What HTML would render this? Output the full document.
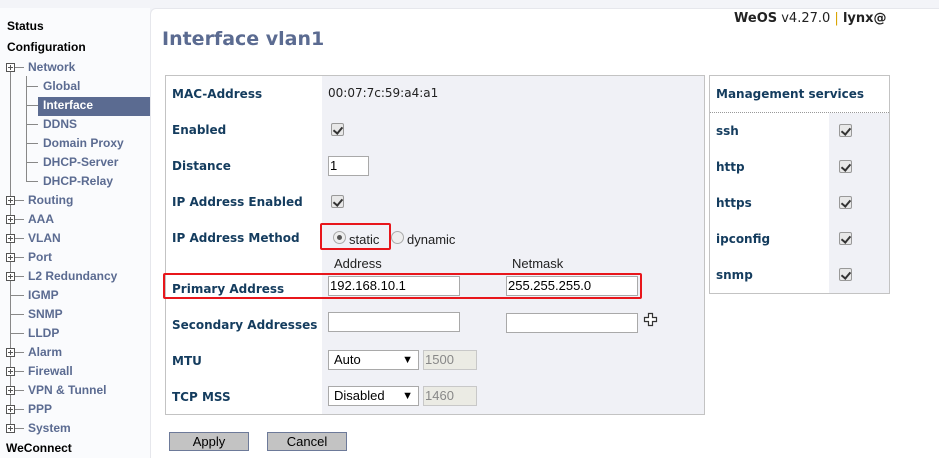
<!DOCTYPE html>
<html><head><meta charset="utf-8"><style>
*{margin:0;padding:0;box-sizing:border-box}
body{width:939px;height:458px;overflow:hidden;background:#f3f4f8;font-family:"Liberation Sans",Arial,sans-serif;position:relative}
.a{position:absolute;white-space:nowrap}
.sb{font-weight:bold;font-size:12px;color:#5b6b91;line-height:19px}
.top{color:#000}
.lbl{font-family:"DejaVu Sans",Verdana,sans-serif;font-weight:bold;font-size:12px;color:#143c5e;line-height:16px}
.cb{position:absolute;width:13px;height:13px;border:1px solid #999;border-radius:2px;background:#e8e8e8}
.cb:after{content:"";position:absolute;left:3px;top:1px;width:4px;height:7px;border:solid #333;border-width:0 2px 2px 0;transform:rotate(40deg)}
.in{position:absolute;border:1px solid #a9a9a9;background:#fff;font-size:13px;line-height:18px;padding-left:1px;color:#000;height:20px}
.dis{background:#ebebe4;color:#888;border-color:#c8c8c8}
.sel{position:absolute;border:1px solid #a9a9a9;background:#fff;font-size:13px;line-height:18px;padding-left:5px;height:20px;width:91px}
.sel:after{content:"▼";position:absolute;right:5px;top:0;font-size:11px}
.pl{position:absolute;width:9px;height:9px;border:1px solid #555;background:#fff}
.pl:before{content:"";position:absolute;left:1px;top:3px;width:5px;height:1px;background:#555}
.pl:after{content:"";position:absolute;left:3px;top:1px;width:1px;height:5px;background:#555}
.btn{position:absolute;background:#c3c3c3;border:1px solid #6d7a99;font-size:13px;text-align:center;line-height:17px;height:19px}
.h{position:absolute;height:1px;background:#888}
</style></head><body>
<div class="a" style="left:0;top:8px;width:150px;height:450px;background:#fafbfd"></div>
<div class="a sb top" style="left:7px;top:17px">Status</div>
<div class="a sb top" style="left:7px;top:38px">Configuration</div>
<div class="a" style="left:10px;top:68px;width:1px;height:362px;background:#888"></div>
<div class="a" style="left:26px;top:76px;width:1px;height:106px;background:#888"></div>
<div class="a" style="left:38px;top:97px;width:113px;height:19px;background:#5b6b91"></div>
<div class="a sb" style="left:28px;top:58px">Network</div>
<div class="a sb" style="left:43px;top:77px">Global</div>
<div class="a sb" style="left:43px;top:96px;color:#fff">Interface</div>
<div class="a sb" style="left:43px;top:115px">DDNS</div>
<div class="a sb" style="left:43px;top:134px">Domain Proxy</div>
<div class="a sb" style="left:43px;top:153px">DHCP-Server</div>
<div class="a sb" style="left:43px;top:172px">DHCP-Relay</div>
<div class="a sb" style="left:28px;top:191px">Routing</div>
<div class="a sb" style="left:28px;top:210px">AAA</div>
<div class="a sb" style="left:28px;top:229px">VLAN</div>
<div class="a sb" style="left:28px;top:248px">Port</div>
<div class="a sb" style="left:28px;top:267px">L2 Redundancy</div>
<div class="a sb" style="left:28px;top:286px">IGMP</div>
<div class="a sb" style="left:28px;top:305px">SNMP</div>
<div class="a sb" style="left:28px;top:324px">LLDP</div>
<div class="a sb" style="left:28px;top:343px">Alarm</div>
<div class="a sb" style="left:28px;top:362px">Firewall</div>
<div class="a sb" style="left:28px;top:381px">VPN &amp; Tunnel</div>
<div class="a sb" style="left:28px;top:400px">PPP</div>
<div class="a sb" style="left:28px;top:419px">System</div>
<div class="a sb top" style="left:6px;top:439px">WeConnect</div>
<div class="h" style="left:10px;top:67px;width:14px"></div>
<div class="h" style="left:26px;top:86px;width:12px"></div>
<div class="h" style="left:26px;top:105px;width:12px"></div>
<div class="h" style="left:26px;top:124px;width:12px"></div>
<div class="h" style="left:26px;top:143px;width:12px"></div>
<div class="h" style="left:26px;top:162px;width:12px"></div>
<div class="h" style="left:26px;top:181px;width:12px"></div>
<div class="h" style="left:10px;top:200px;width:14px"></div>
<div class="h" style="left:10px;top:219px;width:14px"></div>
<div class="h" style="left:10px;top:238px;width:14px"></div>
<div class="h" style="left:10px;top:257px;width:14px"></div>
<div class="h" style="left:10px;top:276px;width:14px"></div>
<div class="h" style="left:10px;top:295px;width:14px"></div>
<div class="h" style="left:10px;top:314px;width:14px"></div>
<div class="h" style="left:10px;top:333px;width:14px"></div>
<div class="h" style="left:10px;top:352px;width:14px"></div>
<div class="h" style="left:10px;top:371px;width:14px"></div>
<div class="h" style="left:10px;top:390px;width:14px"></div>
<div class="h" style="left:10px;top:409px;width:14px"></div>
<div class="h" style="left:10px;top:428px;width:14px"></div>
<div class="pl" style="left:6px;top:63px"></div>
<div class="pl" style="left:6px;top:196px"></div>
<div class="pl" style="left:6px;top:215px"></div>
<div class="pl" style="left:6px;top:234px"></div>
<div class="pl" style="left:6px;top:253px"></div>
<div class="pl" style="left:6px;top:272px"></div>
<div class="pl" style="left:6px;top:348px"></div>
<div class="pl" style="left:6px;top:367px"></div>
<div class="pl" style="left:6px;top:386px"></div>
<div class="pl" style="left:6px;top:405px"></div>
<div class="pl" style="left:6px;top:424px"></div>
<div class="a" style="left:150px;top:8px;width:789px;height:450px;background:#fff;border-radius:6px 0 0 0;border-left:1px solid #e6e7ec;border-top:1px solid #e6e7ec"></div>
<div class="a" style="left:734px;top:11px;font-family:'DejaVu Sans',Verdana,sans-serif;font-size:13px;color:#222"><b>WeOS</b> v4.27.0 <span style="color:#d9a400">|</span> <b>lynx@</b></div>
<div class="a" style="left:162px;top:28px;font-family:'DejaVu Sans',Verdana,sans-serif;font-weight:bold;font-size:19px;color:#5b6b91">Interface vlan1</div>
<div class="a" style="left:165px;top:75px;width:540px;height:340px;border:1px solid #c3c3c3;background:#fff"></div>
<div class="a" style="left:322px;top:76px;width:382px;height:338px;background:#f0f1f6"></div>
<div class="a lbl" style="left:172px;top:86px">MAC-Address</div>
<div class="a" style="left:328px;top:86px;font-family:'DejaVu Sans',Verdana,sans-serif;font-size:12px;color:#222">00:07:7c:59:a4:a1</div>
<div class="a lbl" style="left:172px;top:122px">Enabled</div>
<div class="cb" style="left:331px;top:123px"></div>
<div class="a lbl" style="left:172px;top:158px">Distance</div>
<div class="in" style="left:328px;top:156px;width:41px">1</div>
<div class="a lbl" style="left:172px;top:194px">IP Address Enabled</div>
<div class="cb" style="left:331px;top:195px"></div>
<div class="a lbl" style="left:172px;top:230px">IP Address Method</div>
<div class="a" style="left:333px;top:231px;width:13px;height:13px;border:1px solid #aaa;border-radius:50%;background:#eee"><div style="position:absolute;left:3px;top:3px;width:5px;height:5px;border-radius:50%;background:#555"></div></div>
<div class="a" style="left:349px;top:232px;font-size:13px;color:#222">static</div>
<div class="a" style="left:391px;top:231px;width:13px;height:13px;border:1px solid #aaa;border-radius:50%;background:#eee"></div>
<div class="a" style="left:407px;top:232px;font-size:13px;color:#222">dynamic</div>
<div class="a" style="left:320px;top:223px;width:71px;height:27px;border:2px solid #e8161b;border-radius:2px"></div>
<div class="a" style="left:334px;top:256px;font-size:13px;color:#222">Address</div>
<div class="a" style="left:512px;top:256px;font-size:13px;color:#222">Netmask</div>
<div class="a lbl" style="left:172px;top:281px">Primary Address</div>
<div class="in" style="left:328px;top:276px;width:132px">192.168.10.1</div>
<div class="in" style="left:506px;top:276px;width:132px">255.255.255.0</div>
<div class="a" style="left:163px;top:273px;width:479px;height:26px;border:2px solid #e8161b;border-radius:2px"></div>
<div class="a lbl" style="left:172px;top:317px">Secondary Addresses</div>
<div class="in" style="left:328px;top:312px;width:132px"></div>
<div class="in" style="left:506px;top:313px;width:132px"></div>
<svg class="a" style="left:643px;top:312px" width="15" height="15" viewBox="0 0 15 15"><path d="M5.5 1.5h4v4h4v4h-4v4h-4v-4h-4v-4h4z" fill="#fff" stroke="#333" stroke-width="1.2"/></svg>
<div class="a lbl" style="left:172px;top:353px">MTU</div>
<div class="sel" style="left:328px;top:350px">Auto</div>
<div class="in dis" style="left:423px;top:350px;width:54px">1500</div>
<div class="a lbl" style="left:172px;top:389px">TCP MSS</div>
<div class="sel" style="left:328px;top:386px">Disabled</div>
<div class="in dis" style="left:423px;top:386px;width:54px">1460</div>
<div class="btn" style="left:169px;top:432px;width:80px">Apply</div>
<div class="btn" style="left:267px;top:432px;width:80px">Cancel</div>
<div class="a" style="left:709px;top:75px;width:181px;height:219px;border:1px solid #c3c3c3;background:#fff"></div>
<div class="a" style="left:829px;top:113px;width:60px;height:180px;background:#f0f1f6"></div>
<div class="a" style="left:710px;top:112px;width:179px;border-top:1px dotted #999"></div>
<div class="a lbl" style="left:716px;top:86px">Management services</div>
<div class="a lbl" style="left:716px;top:123px">ssh</div><div class="cb" style="left:839px;top:124px"></div>
<div class="a lbl" style="left:716px;top:159px">http</div><div class="cb" style="left:839px;top:160px"></div>
<div class="a lbl" style="left:716px;top:195px">https</div><div class="cb" style="left:839px;top:196px"></div>
<div class="a lbl" style="left:716px;top:231px">ipconfig</div><div class="cb" style="left:839px;top:232px"></div>
<div class="a lbl" style="left:716px;top:267px">snmp</div><div class="cb" style="left:839px;top:268px"></div>
</body></html>
